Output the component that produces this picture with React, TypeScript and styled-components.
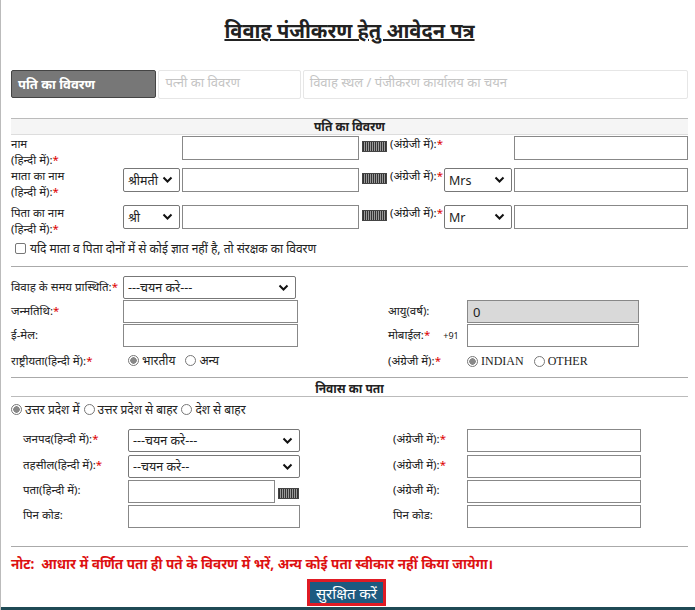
import React from "react";
import styled, { createGlobalStyle } from "styled-components";

const G = createGlobalStyle`
  html,body{margin:0;padding:0;background:#fff;}
  body{font-family:"Noto Sans","Lohit Devanagari","Liberation Sans",sans-serif;font-size:12px;color:#222;}
  *{box-sizing:border-box;}
`;
const Page = styled.div`
  width:695px;height:610px;border-left:1px solid #bbb;padding:0 7px 0 10px;position:relative;overflow:hidden;
  display:flex;flex-direction:column;
`;
const Title = styled.h1`
  margin:14px 0 0;text-align:center;font-size:20px;font-weight:700;text-decoration:underline;line-height:34px;height:38px;
`;
const Tabs = styled.div`display:flex;margin-top:18px;height:29px;gap:2px;`;
const Tab = styled.div<{ $active?: boolean; $w: number }>`
  width:${p => p.$w}px;height:${p => (p.$active ? 28 : 29)}px;border-radius:2px;padding:2px 6px;font-size:13px;
  ${p => p.$active
    ? "background:#777;color:#fff;font-weight:700;border:1px solid #444;display:flex;align-items:center;"
    : "color:#c4c4c4;border:1px solid #e6e6e6;"}
`;
const SecHead = styled.div<{ $mt: number }>`
  margin-top:${p => p.$mt}px;border-top:1px solid #bbb;border-bottom:1px solid #ddd;background:#f5f5f5;
  text-align:center;font-weight:700;font-size:12px;height:17px;line-height:15px;
`;
const Row3 = styled.div<{ $h: number }>`
  display:grid;grid-template-columns:112px 59px 177px 31px 54px 70px 174px;height:${p => p.$h}px;align-items:start;
`;
const Lbl = styled.div`font-size:11.5px;line-height:16px;white-space:nowrap;`;
const Star = styled.span`color:#d00;`;
const Inp = styled.div<{ $w?: number; $h?: number; $gray?: boolean }>`
  width:${p => (p.$w ? p.$w + "px" : "100%")};height:${p => p.$h ?? 24}px;border:1px solid #888;
  background:${p => (p.$gray ? "#d9d9d9" : "#fff")};padding:2px 5px;font-size:13px;display:flex;align-items:center;
`;
const Sel = styled.div<{ $w?: number; $h?: number }>`
  width:${p => (p.$w ? p.$w + "px" : "100%")};height:${p => p.$h ?? 24}px;border:1px solid #777;border-radius:2px;
  display:flex;align-items:center;justify-content:space-between;padding:0 6px 0 4px;font-size:12.5px;background:#fff;
`;
const Kb = styled.div`width:25px;height:11px;margin:5px 3px 0 3px;background:repeating-linear-gradient(90deg,#333 0 1px,#999 1px 2px);border:1px solid #444;`;
const Chk = styled.div`display:flex;align-items:center;gap:4px;margin:10px 0 0 4px;font-size:12px;`;
const Box = styled.span`width:11px;height:11px;border:1px solid #777;border-radius:2px;display:inline-block;`;
const Hr = styled.div<{ $mt: number }>`margin-top:${p => p.$mt}px;border-top:1px solid #aaa;`;
const Grid2 = styled.div<{ $h: number; $mt?: number }>`
  display:grid;grid-template-columns:112px 175px 90px 79px 172px;height:${p => p.$h}px;align-items:start;margin-top:${p => p.$mt ?? 0}px;
`;
const Radios = styled.div<{ $gap?: number; $pl?: number }>`display:flex;align-items:center;gap:${p => p.$gap ?? 10}px;padding-left:${p => p.$pl ?? 0}px;font-size:12px;`;
const R = styled.span`display:inline-flex;align-items:center;gap:3px;`;
const Dot = styled.span<{ $on?: boolean }>`
  width:11px;height:11px;border-radius:50%;border:1px solid #777;display:inline-block;
  background:${p => (p.$on ? "radial-gradient(circle,#888 0 3px,#fff 3.5px)" : "#fff")};
`;
const Eng = styled.span`font-family:"Liberation Serif",serif;font-size:12px;`;
const Grid3 = styled.div<{ $h: number; $mt?: number }>`
  display:grid;grid-template-columns:12px 105px 174px 91px 74px 174px;height:${p => p.$h}px;align-items:start;margin-top:${p => p.$mt ?? 0}px;
`;
const Note = styled.div`color:#d11;font-weight:700;font-size:13.5px;margin-top:8px;`;
const BtnWrap = styled.div`display:flex;justify-content:center;margin-top:6px;`;
const Btn = styled.div`border:3px solid #e01b24;background:#1d5a80;color:#fff;font-size:15px;padding:0 6px;height:27px;line-height:22px;margin-left:-6px;`;
const Bottom = styled.div`position:absolute;left:0;right:0;bottom:0;height:3px;background:#1f4a55;`;
const Center = styled.div`text-align:center;font-weight:700;height:17px;line-height:17px;border-bottom:1px solid #bbb;margin-top:2px;`;

const Chev = () => (
  <svg width="11" height="8" viewBox="0 0 11 8"><path d="M1.5 1.5l4 4 4-4" stroke="#111" strokeWidth="2" fill="none" /></svg>
);

export default function App() {
  return (
    <Page>
      <G />
      <Title>विवाह पंजीकरण हेतु आवेदन पत्र</Title>
      <Tabs>
        <Tab $active $w={146}>पति का विवरण</Tab>
        <Tab $w={143}>पत्नी का विवरण</Tab>
        <Tab $w={387}>विवाह स्थल / पंजीकरण कार्यालय का चयन</Tab>
      </Tabs>
      <SecHead $mt={19}>पति का विवरण</SecHead>
      <Row3 $h={32} style={{ marginTop: 1 }}>
        <Lbl>नाम<br />(हिन्दी में):<Star>*</Star></Lbl><div />
        <Inp /><Kb /><Lbl>(अंग्रेजी में):<Star>*</Star></Lbl><div /><Inp />
      </Row3>
      <Row3 $h={37}>
        <Lbl>माता का नाम<br />(हिन्दी में):<Star>*</Star></Lbl>
        <Sel $w={57}>श्रीमती<Chev /></Sel><Inp /><Kb /><Lbl>(अंग्रेजी में):<Star>*</Star></Lbl>
        <Sel $w={68}>Mrs<Chev /></Sel><Inp />
      </Row3>
      <Row3 $h={33}>
        <Lbl>पिता का नाम<br />(हिन्दी में):<Star>*</Star></Lbl>
        <Sel $w={57}>श्री<Chev /></Sel><Inp /><Kb /><Lbl>(अंग्रेजी में):<Star>*</Star></Lbl>
        <Sel $w={68}>Mr<Chev /></Sel><Inp />
      </Row3>
      <Chk style={{ marginTop: 2 }}><Box />यदि माता व पिता दोनों में से कोई ज्ञात नहीं है, तो संरक्षक का विवरण</Chk>
      <Hr $mt={9} />
      <Grid2 $h={24} $mt={9}>
        <Lbl style={{ paddingTop: 3 }}>विवाह के समय प्रास्थिति:<Star>*</Star></Lbl>
        <Sel $w={173} $h={23}>---चयन करे---<Chev /></Sel>
      </Grid2>
      <Grid2 $h={24}>
        <Lbl style={{ paddingTop: 3 }}>जन्मतिथि:<Star>*</Star></Lbl><Inp $h={23} /><div />
        <Lbl style={{ paddingTop: 3 }}>आयु(वर्ष):</Lbl><Inp $h={23} $gray>0</Inp>
      </Grid2>
      <Grid2 $h={24}>
        <Lbl style={{ paddingTop: 3 }}>ई-मेल:</Lbl><Inp $h={23} /><div />
        <Lbl style={{ paddingTop: 3 }}>मोबाईल:<Star>*</Star> <span style={{ fontSize: 9, marginLeft: 10 }}>+91</span></Lbl><Inp $h={23} />
      </Grid2>
      <Grid2 $h={24}>
        <Lbl style={{ paddingTop: 5 }}>राष्ट्रीयता(हिन्दी में):<Star>*</Star></Lbl>
        <Radios style={{ paddingTop: 4 }} $pl={5}><R><Dot $on />भारतीय</R><R><Dot />अन्य</R></Radios><div />
        <Lbl style={{ paddingTop: 5 }}>(अंग्रेजी में):<Star>*</Star></Lbl>
        <Radios style={{ paddingTop: 6 }} $pl={0}><R><Dot $on /><Eng>INDIAN</Eng></R><R><Dot /><Eng>OTHER</Eng></R></Radios>
      </Grid2>
      <Hr $mt={5} />
      <Center>निवास का पता</Center>
      <Radios $gap={4} style={{ marginTop: 3, height: 18 }}><R><Dot $on />उत्तर प्रदेश में</R><R><Dot />उत्तर प्रदेश से बाहर</R><R><Dot />देश से बाहर</R></Radios>
      <Grid3 $h={26} $mt={11}>
        <div /><Lbl style={{ paddingTop: 2 }}>जनपद(हिन्दी में):<Star>*</Star></Lbl>
        <Sel $w={172} $h={23}>---चयन करे---<Chev /></Sel><div />
        <Lbl style={{ paddingTop: 2 }}>(अंग्रेजी में):<Star>*</Star></Lbl><Inp $h={23} />
      </Grid3>
      <Grid3 $h={25}>
        <div /><Lbl style={{ paddingTop: 2 }}>तहसील(हिन्दी में):<Star>*</Star></Lbl>
        <Sel $w={172} $h={23}>--चयन करे--<Chev /></Sel><div />
        <Lbl style={{ paddingTop: 2 }}>(अंग्रेजी में):<Star>*</Star></Lbl><Inp $h={23} />
      </Grid3>
      <Grid3 $h={25}>
        <div /><Lbl style={{ paddingTop: 2 }}>पता(हिन्दी में):</Lbl>
        <div style={{ display: "flex" }}><Inp $w={172} $h={23} /><Kb style={{ marginTop: 8 }} /></div><div />
        <Lbl style={{ paddingTop: 2 }}>(अंग्रेजी में):</Lbl><Inp $h={23} />
      </Grid3>
      <Grid3 $h={24}>
        <div /><Lbl style={{ paddingTop: 2 }}>पिन कोड:</Lbl><Inp $w={172} $h={23} /><div />
        <Lbl style={{ paddingTop: 2 }}>पिन कोड:</Lbl><Inp $h={23} />
      </Grid3>
      <Hr $mt={17} />
      <Note>नोट:&nbsp; आधार में वर्णित पता ही पते के विवरण में भरें, अन्य कोई पता स्वीकार नहीं किया जायेगा।</Note>
      <BtnWrap><Btn>सुरक्षित करें</Btn></BtnWrap>
      <Bottom />
    </Page>
  );
}
